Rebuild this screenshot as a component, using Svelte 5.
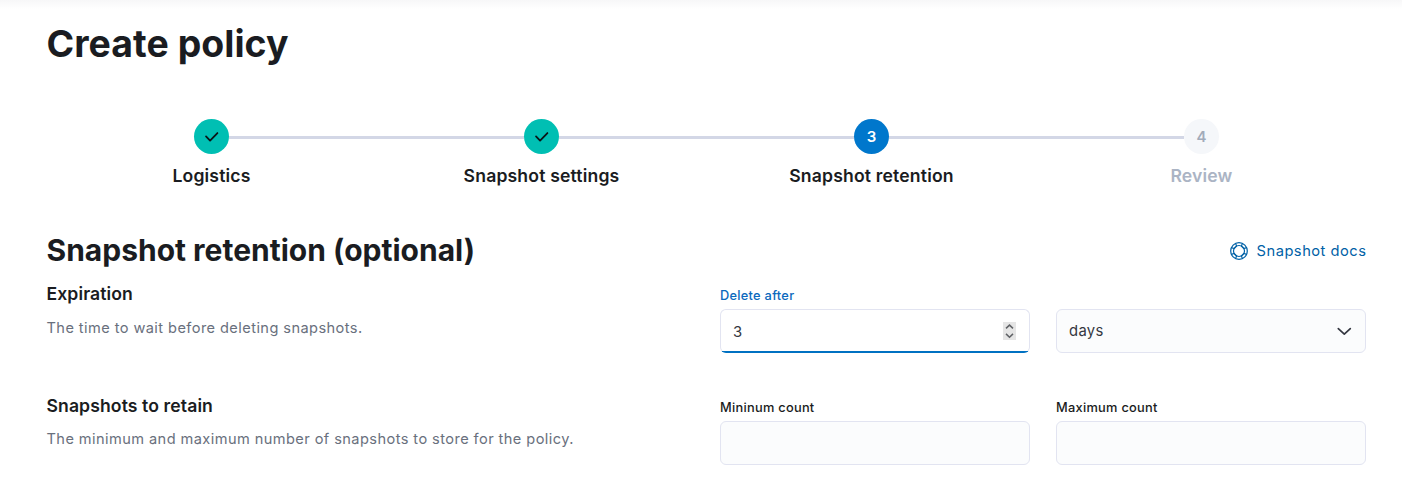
<script>
  const steps = [
    { label: 'Logistics', state: 'complete' },
    { label: 'Snapshot settings', state: 'complete' },
    { label: 'Snapshot retention', state: 'current' },
    { label: 'Review', state: 'disabled' }
  ];
  let deleteAfter = $state('3');
</script>

<main class="page">
  <h1>Create policy</h1>

  <ol class="steps">
    {#each steps as step, i}
      <li class="step {step.state}">
        <div class="track">
          <span class="line" class:hidden={i === 0}></span>
          <span class="circle">
            {#if step.state === 'complete'}
              <svg width="18" height="18" viewBox="0 0 16 16" fill="none" stroke="#0b1518" stroke-width="1.6" stroke-linecap="round" stroke-linejoin="round"><path d="M2.7 7.5 6.3 11.2 12.8 4.5" /></svg>
            {:else}
              {i + 1}
            {/if}
          </span>
          <span class="line" class:hidden={i === steps.length - 1}></span>
        </div>
        <span class="step-title">{step.label}</span>
      </li>
    {/each}
  </ol>

  <header class="section-head">
    <h2>Snapshot retention (optional)</h2>
    <a href="#docs">
      <svg width="18" height="18" viewBox="0 0 18 18" fill="none" stroke="currentColor" stroke-width="1.2">
        <circle cx="9" cy="9" r="8.3" />
        <circle cx="9" cy="9" r="5.5" />
        <path d="M5.6 1.4 6.6 4.2 4.2 6.6 1.4 5.6M12.4 1.4 11.4 4.2 13.8 6.6 16.6 5.6M5.6 16.6 6.6 13.8 4.2 11.4 1.4 12.4M12.4 16.6 11.4 13.8 13.8 11.4 16.6 12.4" />
      </svg>
      <span>Snapshot docs</span>
    </a>
  </header>

  <section class="group">
    <div class="description">
      <h3>Expiration</h3>
      <p>The time to wait before deleting snapshots.</p>
    </div>
    <div class="fields">
      <div class="field">
        <label class="active" for="delete-after">Delete after</label>
        <div class="control focused">
          <input id="delete-after" bind:value={deleteAfter} />
          <span class="spinner">
            <svg width="13" height="18" viewBox="0 0 13 18" fill="none" stroke="#606266" stroke-width="1.5"><path d="M3 6.4 6.5 3.1 10 6.4M3 11.9 6.5 15.2 10 11.9" /></svg>
          </span>
        </div>
      </div>
      <div class="field">
        <div class="control select">
          <span>days</span>
          <svg width="18" height="18" viewBox="0 0 18 18" fill="none" stroke="#343741" stroke-width="1.7" stroke-linecap="round" stroke-linejoin="round"><path d="M4.3 6.6 10.3 12.2 16.3 6.6" /></svg>
        </div>
      </div>
    </div>
  </section>

  <section class="group">
    <div class="description">
      <h3>Snapshots to retain</h3>
      <p>The minimum and maximum number of snapshots to store for the policy.</p>
    </div>
    <div class="fields">
      <div class="field">
        <label for="min-count">Mininum count</label>
        <div class="control"><input id="min-count" /></div>
      </div>
      <div class="field">
        <label for="max-count">Maximum count</label>
        <div class="control"><input id="max-count" /></div>
      </div>
    </div>
  </section>
</main>

<style>
  :global(body) { background: #fff; }
  .page {
    box-sizing: border-box;
    width: 1402px;
    height: 492px;
    overflow: hidden;
    padding: 22px 36px 0 46.5px;
    background: linear-gradient(#f7f7f8, #fff 9px);
    color: #1a1c21;
    font-family: Inter, sans-serif;
  }
  h1, h2, h3, p, ol { margin: 0; padding: 0; }
  h1 { font-size: 37.4px; line-height: 44px; font-weight: 700; letter-spacing: 0.05px; }
  .steps { display: flex; list-style: none; width: 1320px; margin: 53px 0 0; }
  .step { flex: 1; display: flex; flex-direction: column; align-items: center; }
  .track { display: flex; align-items: center; width: 100%; height: 35px; }
  .line { flex: 1; height: 3px; margin-top: 2px; background: #d3d7e6; }
  .line.hidden { visibility: hidden; }
  .circle {
    display: flex; align-items: center; justify-content: center;
    width: 35px; height: 35px; border-radius: 50%;
    font-size: 15px; font-weight: 600;
  }
  .complete .circle { background: #00bfb3; }
  .current .circle { background: #0077cc; color: #fff; }
  .disabled .circle { background: #f5f7fa; color: #a2abba; }
  .step-title { margin-top: 9px; font-size: 17.6px; line-height: 26px; font-weight: 630; letter-spacing: 0.16px; }
  .disabled .step-title { color: #abb4c4; }
  .section-head { display: flex; justify-content: space-between; align-items: center; width: 1320px; height: 36px; margin-top: 43px; }
  h2 { font-size: 30px; line-height: 36px; font-weight: 700; letter-spacing: 0; }
  a { display: flex; align-items: center; gap: 9px; padding-top: 1px; color: #0061a6; font-size: 14.7px; letter-spacing: 0.5px; text-decoration: none; }
  .group { display: flex; width: 1319.5px; height: 112px; }
  .description { width: 673.5px; padding-top: 13px; box-sizing: border-box; }
  h3 { font-size: 17.6px; line-height: 26px; font-weight: 640; letter-spacing: 0.1px; }
  p { margin-top: 8px; font-size: 14.6px; line-height: 26px; letter-spacing: 0.42px; color: #69707d; }
  .group + .group p { margin-top: 7px; }
  .fields { display: flex; gap: 26px; padding-top: 18px; box-sizing: border-box; height: 112px; }
  .field { display: flex; flex-direction: column; justify-content: flex-start; width: 310px; }
  .field:has(.select) { padding-top: 23px; }
  label { height: 23px; line-height: 19px; font-size: 12.8px; font-weight: 550; letter-spacing: 0.28px; }
  label.active { color: #0b69bd; }
  .control {
    display: flex; align-items: center; justify-content: space-between;
    box-sizing: border-box; height: 44px; padding: 0 13px 0 12px;
    border: 1px solid #e2e4f1; border-radius: 6px; background: #fbfcfd;
    color: #343741; font-size: 14.8px; letter-spacing: 0.35px;
  }
  .focused { background: linear-gradient(to top, #0071c2 2px, #fff 2px); background-origin: border-box; border-bottom-color: transparent; }
  .spinner { width: 13px; height: 18px; background: #e5e5e5; }
  .spinner svg { display: block; }
  input {
    flex: 1; min-width: 0; padding: 1px 0 0; border: 0; outline: 0; background: transparent;
    color: inherit; font: inherit;
  }
</style>
